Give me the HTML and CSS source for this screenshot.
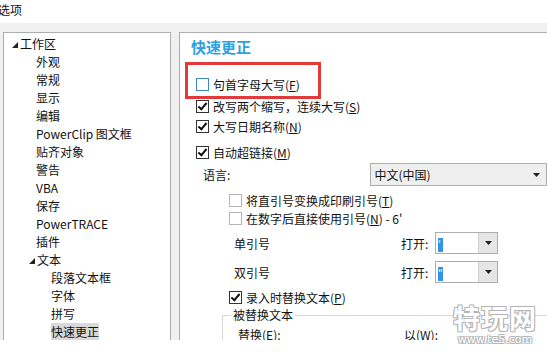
FILE: index.html
```html
<!DOCTYPE html>
<html lang="zh-CN">
<head>
    <meta charset="UTF-8">
    <title>选项</title>
    <link rel="stylesheet" href="styles.css">
</head>
<body>
    <div class="titlebar">选项</div>
    <div class="main">
        <ul class="tree">
            <li class="node"><svg class="twisty" viewBox="0 0 7 7"><polygon points="7,0 7,7 0,7"/></svg>工作区</li>
            <li class="leaf">外观</li>
            <li class="leaf">常规</li>
            <li class="leaf">显示</li>
            <li class="leaf">编辑</li>
            <li class="leaf">PowerClip 图文框</li>
            <li class="leaf">贴齐对象</li>
            <li class="leaf">警告</li>
            <li class="leaf">VBA</li>
            <li class="leaf">保存</li>
            <li class="leaf">PowerTRACE</li>
            <li class="leaf">插件</li>
            <li class="node sub"><svg class="twisty" viewBox="0 0 7 7"><polygon points="7,0 7,7 0,7"/></svg>文本</li>
            <li class="leaf deep">段落文本框</li>
            <li class="leaf deep">字体</li>
            <li class="leaf deep">拼写</li>
            <li class="leaf deep"><span class="selected">快速更正</span></li>
        </ul>

        <div class="page">
            <h1>快速更正</h1>

            <div class="highlight">
                <label class="check"><span class="box focus"></span>句首字母大写(<u>F</u>)</label>
            </div>
            <label class="check row-s"><span class="box on"></span>改写两个缩写，连续大写(<u>S</u>)</label>
            <label class="check row-n"><span class="box on"></span>大写日期名称(<u>N</u>)</label>
            <label class="check row-m"><span class="box on"></span>自动超链接(<u>M</u>)</label>

            <div class="lang">
                <span class="lang-label">语言:</span>
                <div class="select wide">
                    <span>中文(中国)</span>
                    <svg class="caret" viewBox="0 0 7 4"><polygon points="0,0 7,0 3.5,4"/></svg>
                </div>
            </div>

            <label class="check inner row-t"><span class="box"></span>将直引号变换成印刷引号(<u>T</u>)</label>
            <label class="check inner"><span class="box"></span>在数字后直接使用引号(<u>N</u>) - 6'</label>

            <div class="quote q1">
                <span class="quote-label">单引号</span>
                <span class="open">打开:</span>
                <div class="combo">
                    <span class="combo-text"><span class="sel">'</span></span>
                    <span class="combo-btn"><svg class="caret" viewBox="0 0 7 4"><polygon points="0,0 7,0 3.5,4"/></svg></span>
                </div>
            </div>
            <div class="quote q2">
                <span class="quote-label">双引号</span>
                <span class="open">打开:</span>
                <div class="combo">
                    <span class="combo-text"><span class="sel">"</span></span>
                    <span class="combo-btn"><svg class="caret" viewBox="0 0 7 4"><polygon points="0,0 7,0 3.5,4"/></svg></span>
                </div>
            </div>

            <label class="check inner row-p"><span class="box on"></span>录入时替换文本(<u>P</u>)</label>

            <fieldset class="group">
                <legend>被替换文本</legend>
                <div class="replace">
                    <span class="replace-label">替换(<u>E</u>):</span>
                    <span>以(<u>W</u>):</span>
                </div>
            </fieldset>
        </div>
    </div>
    <div class="watermark">
        <div class="wm-big">特玩网</div>
        <div class="wm-small">www.te5.com</div>
    </div>
</body>
</html>
```

FILE: styles.css
```css
body {
    margin: 0;
    width: 547px;
    height: 352px;
    overflow: hidden;
    background: #ffffff;
    font-family: "Noto Sans CJK SC", "Microsoft YaHei", sans-serif;
    font-size: 12px;
    color: #111111;
    position: relative;
}
.titlebar {
    height: 23px;
    line-height: 20px;
    margin-left: -2px;
}
.main {
    display: flex;
    gap: 8px;
    height: 308px;
    padding: 9px 0 0 3px;
    background: #f0f0f0;
}

/* tree on the left */
.tree {
    list-style: none;
    margin: 0;
    width: 166px;
    padding: 2px 0 0 0;
    background: #ffffff;
    border: 1px solid #adadad;
    border-bottom: none;
}
.tree li {
    height: 18px;
    line-height: 18px;
    white-space: nowrap;
}
.node {
    padding-left: 8px;
    display: flex;
    align-items: center;
}
.node.sub {
    padding-left: 25px;
}
.twisty {
    width: 6px;
    height: 6px;
    margin-right: 2px;
    margin-top: 1px;
    fill: #222222;
}
.leaf {
    padding-left: 32px;
}
.leaf.deep {
    padding-left: 47px;
}
.selected {
    background: #d9d9d9;
    display: inline-block;
    height: 17px;
    line-height: 17px;
}

/* settings page */
.page {
    flex: 1;
    background: #ffffff;
    border: 1px solid #adadad;
    border-right: none;
    border-bottom: none;
    padding: 3px 0 0 11px;
    overflow: hidden;
}
h1 {
    margin: 0;
    height: 22px;
    line-height: 22px;
    font-size: 15px;
    font-weight: bold;
    color: #2f9fe4;
}
.highlight {
    margin: 4px 0 0 -6px;
    width: 122px;
    height: 20px;
    border: 3px solid #e23a3a;
    padding: 11px 0 0 8px;
}
.check {
    display: flex;
    align-items: center;
    height: 20px;
    white-space: nowrap;
    padding-left: 5px;
}
.highlight .check {
    padding-left: 0;
    height: 16px;
}
.box {
    width: 11px;
    height: 11px;
    border: 1px solid #333333;
    margin-right: 4px;
    background: #ffffff;
    position: relative;
    flex: none;
}
.box.focus {
    border-color: #3f8ac4;
}
.check.inner .box {
    border-color: #b5b5b5;
}
.check.inner .box.on {
    border-color: #333333;
}
.box.on::after {
    content: "";
    position: absolute;
    left: 3px;
    top: 0px;
    width: 3px;
    height: 7px;
    border: solid #111111;
    border-width: 0 2px 2px 0;
    transform: rotate(40deg);
}
.row-s {
    margin-top: -3px;
}
.row-m {
    margin-top: 6px;
}
.lang {
    display: flex;
    align-items: center;
    margin-top: 1px;
    height: 23px;
}
.lang-label {
    width: 167px;
    padding-left: 12px;
}
.select {
    display: flex;
    align-items: center;
    justify-content: space-between;
    height: 21px;
    border: 1px solid #adadad;
    background: #efefef;
    padding: 0 6px 0 4px;
}
.select.wide {
    width: 166px;
}
.caret {
    width: 7px;
    height: 4px;
    fill: #222222;
}
.check.inner {
    padding-left: 38px;
    height: 18px;
}
.row-t {
    margin-top: 5px;
}
.quote {
    display: flex;
    align-items: center;
    height: 22px;
}
.q1 {
    margin-top: 5px;
}
.q2 {
    margin-top: 7px;
}
.quote-label {
    width: 167px;
    padding-left: 43px;
}
.open {
    width: 34px;
}
.combo {
    display: flex;
    width: 61px;
    height: 20px;
    border: 1px solid #adadad;
    background: #ffffff;
}
.combo-text {
    flex: 1;
    padding: 2px 0 0 2px;
}
.sel {
    display: inline-block;
    background: #3393e8;
    color: #ffffff;
    width: 5px;
    height: 14px;
    line-height: 14px;
    font-size: 10px;
}
.combo-btn {
    width: 18px;
    display: flex;
    align-items: center;
    justify-content: center;
    background: #e6e6e6;
    border-left: 1px solid #d0d0d0;
}
.row-p {
    margin-top: 5px;
}
.group {
    margin: 1px 0 0 31px;
    padding: 0 0 0 15px;
    border: 1px solid #d8d8d8;
    border-right: none;
    height: 40px;
}
.group legend {
    padding: 0 2px;
    margin-left: -7px;
    line-height: 16px;
}
.replace {
    display: flex;
    height: 20px;
    align-items: center;
    margin-top: 1px;
}
.replace-label {
    width: 166px;
}

/* site watermark over the bottom corner */
.watermark {
    position: absolute;
    left: 450px;
    top: 302px;
    width: 90px;
    text-align: center;
    color: #ffffff;
}
.wm-big {
    font-size: 27px;
    font-weight: bold;
    line-height: 31px;
    letter-spacing: 1px;
    text-shadow: -1px -1px 0 #b4b4b4, 1px -1px 0 #b4b4b4, -1px 1px 0 #b4b4b4, 1px 1px 0 #b4b4b4;
}
.wm-small {
    font-family: "DejaVu Sans", sans-serif;
    font-size: 11px;
    line-height: 13px;
    text-shadow: -1px -1px 0 #b4b4b4, 1px -1px 0 #b4b4b4, -1px 1px 0 #b4b4b4, 1px 1px 0 #b4b4b4;
}
```
